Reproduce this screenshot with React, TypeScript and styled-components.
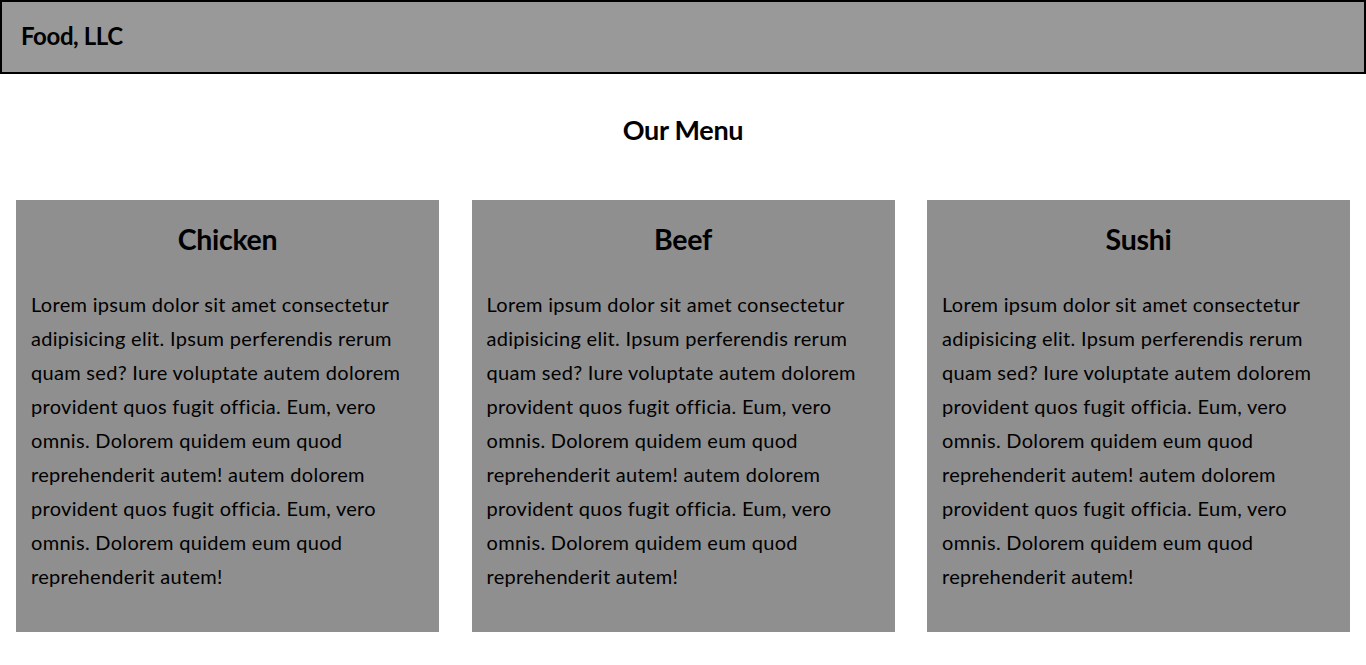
import React from "react";
import styled, { createGlobalStyle } from "styled-components";

const Global = createGlobalStyle`
  html, body { margin: 0; padding: 0; background: #ffffff; }
  body { font-family: Lato, "Open Sans", sans-serif; color: #000; }
`;

const Header = styled.header`
  height: 74px;
  box-sizing: border-box;
  border: 2px solid #000;
  background: #999999;
  display: flex;
  align-items: center;
  padding: 0 0 3px 19px;
`;

const Brand = styled.h1`
  margin: 0;
  font-size: 24px;
  font-weight: 700;
  letter-spacing: -0.4px;
`;

const Title = styled.h2`
  margin: 0 0 16px;
  height: 110px;
  display: flex;
  align-items: center;
  justify-content: center;
  font-size: 27px;
  font-weight: 700;
  letter-spacing: -0.3px;
`;

const Grid = styled.main`
  display: grid;
  grid-template-columns: repeat(3, 1fr);
  gap: 32.5px;
  padding: 0 16px;
`;

const Card = styled.section`
  background: #8f8f8f;
  height: 432px;
  box-sizing: border-box;
  padding: 20px 15px 0;
`;

const CardTitle = styled.h3`
  margin: 0;
  text-align: center;
  font-size: 28.5px;
  font-weight: 700;
  line-height: 38px;
  letter-spacing: -0.3px;
`;

const Body = styled.p`
  margin: 29px 0 0;
  font-size: 20px;
  line-height: 34px;
  letter-spacing: 0.3px;
`;

const text =
  "Lorem ipsum dolor sit amet consectetur adipisicing elit. Ipsum perferendis rerum quam sed? Iure voluptate autem dolorem provident quos fugit officia. Eum, vero omnis. Dolorem quidem eum quod reprehenderit autem! autem dolorem provident quos fugit officia. Eum, vero omnis. Dolorem quidem eum quod reprehenderit autem!";

const items = ["Chicken", "Beef", "Sushi"];

export default function App() {
  return (
    <>
      <Global />
      <Header>
        <Brand>Food, LLC</Brand>
      </Header>
      <Title>Our Menu</Title>
      <Grid>
        {items.map((name) => (
          <Card key={name}>
            <CardTitle>{name}</CardTitle>
            <Body>{text}</Body>
          </Card>
        ))}
      </Grid>
    </>
  );
}
